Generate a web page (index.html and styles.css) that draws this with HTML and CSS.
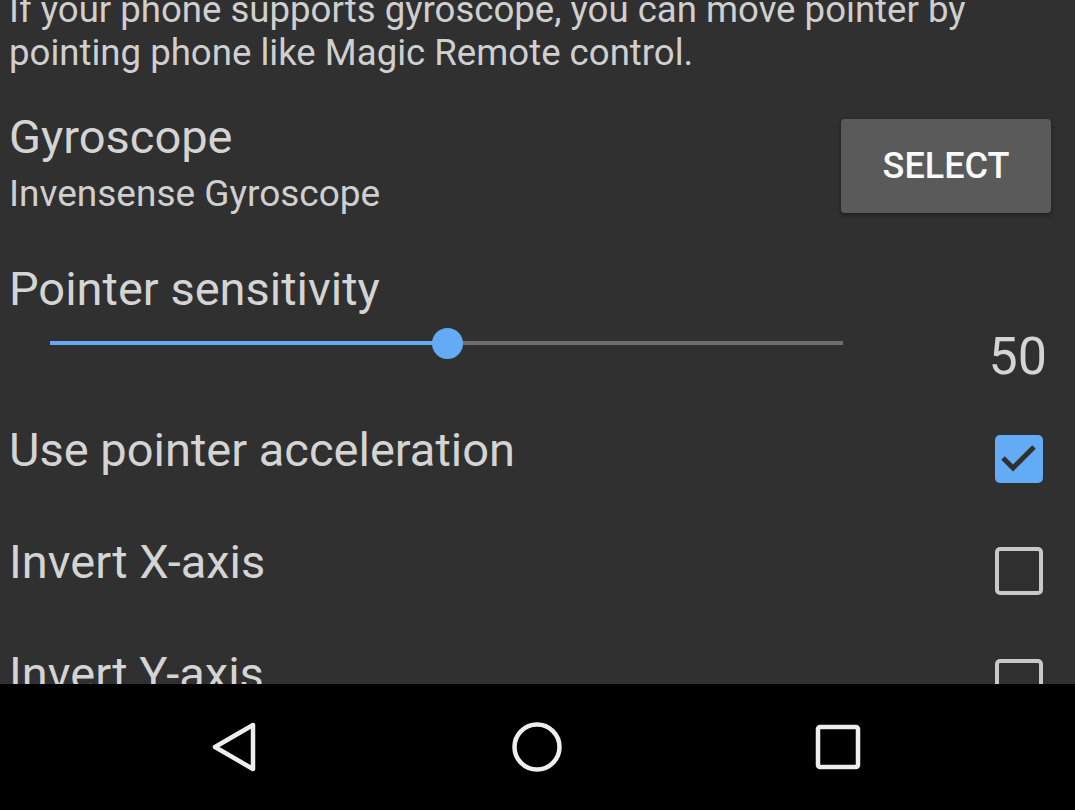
FILE: index.html
```html
<!DOCTYPE html>
<html>
<head>
<meta charset="utf-8">
<link rel="stylesheet" href="styles.css">
</head>
<body>
<div class="screen">
  <div class="content">
    <p class="desc">If your phone supports gyroscope, you can move pointer by pointing phone like Magic Remote control.</p>
    <div class="row gyro">
      <div class="texts">
        <div class="title">Gyroscope</div>
        <div class="sub">Invensense Gyroscope</div>
      </div>
      <button class="btn">SELECT</button>
    </div>
    <div class="sens">
      <div class="title">Pointer sensitivity</div>
      <div class="slider-row">
        <div class="slider">
          <div class="fill" style="width:50.1%"></div>
          <div class="thumb" style="left:50.1%"></div>
        </div>
        <div class="value">50</div>
      </div>
    </div>
    <div class="row check-row accel">
      <div class="title">Use pointer acceleration</div>
      <span class="cb checked">
        <svg viewBox="0 0 48 48" width="48" height="48"><rect x="0" y="0" width="48" height="48" rx="5" fill="#64abf5"/><path d="M8 23 L18 33 L39 12" fill="none" stroke="#303030" stroke-width="5"/></svg>
      </span>
    </div>
    <div class="row check-row">
      <div class="title">Invert X-axis</div>
      <span class="cb"></span>
    </div>
    <div class="row check-row">
      <div class="title">Invert Y-axis</div>
      <span class="cb"></span>
    </div>
  </div>
</div>
<div class="nav">
  <svg class="nav-icon" width="50" height="52" viewBox="0 0 50 52"><path d="M44 4 L44 48 L6 26 Z" fill="none" stroke="#eeeeee" stroke-width="4.5" stroke-linejoin="round"/></svg>
  <svg class="nav-icon" width="52" height="52" viewBox="0 0 52 52"><circle cx="26" cy="26" r="22.5" fill="none" stroke="#eeeeee" stroke-width="4.5"/></svg>
  <svg class="nav-icon" width="46" height="46" viewBox="0 0 46 46"><rect x="3" y="3" width="40" height="40" rx="2" fill="none" stroke="#eeeeee" stroke-width="4.5"/></svg>
</div>
</body>
</html>
```
FILE: styles.css
```css
html, body {
  margin: 0;
  padding: 0;
  background: #000;
}
body {
  width: 1075px;
  height: 810px;
  display: flex;
  flex-direction: column;
  font-family: Roboto, "Noto Sans", sans-serif;
  overflow: hidden;
}
.screen {
  height: 684px;
  flex: none;
  background: #303030;
  overflow: hidden;
  color: #d2d2d2;
}
.content {
  margin-top: -12px;
  padding: 0 24px 0 9px;
}
.desc {
  margin: 0;
  font-size: 36.6px;
  line-height: 43px;
  color: #cfcfcf;
}
.row {
  display: flex;
  align-items: flex-start;
  justify-content: space-between;
}
.gyro {
  margin-top: 35px;
}
.title {
  font-size: 47px;
  line-height: 56px;
  color: #d4d4d4;
}
.sub {
  font-size: 37px;
  line-height: 43px;
  margin-top: 7px;
  color: #cfcfcf;
}
.btn {
  width: 210px;
  height: 94px;
  margin-top: 10px;
  background: #5a5a5a;
  border: none;
  border-radius: 4px;
  color: #fafafa;
  font-family: Roboto, sans-serif;
  font-weight: 500;
  font-size: 36px;
  box-shadow: 0 2px 4px rgba(0,0,0,0.4);
  padding: 0;
}
.sens {
  margin-top: 46px;
}
.slider-row {
  display: flex;
  align-items: flex-start;
  height: 70px;
}
.slider {
  position: relative;
  margin-left: 41px;
  margin-top: 24px;
  width: 793px;
  height: 4px;
  background: #6d6d6d;
}
.fill {
  position: absolute;
  left: 0;
  top: 0;
  height: 4px;
  background: #64abf5;
}
.thumb {
  position: absolute;
  top: 2px;
  width: 31px;
  height: 31px;
  margin: -15.5px 0 0 -15.5px;
  border-radius: 50%;
  background: #64abf5;
}
.value {
  margin-left: auto;
  margin-top: 10px;
  margin-right: 4px;
  font-size: 52px;
  line-height: 60px;
  color: #d4d4d4;
}
.check-row {
  height: 112px;
}
.accel {
  margin-top: 35px;
}
.cb {
  width: 48px;
  height: 48px;
  margin-top: 13px;
  margin-right: 8px;
  box-sizing: border-box;
  border: 4.5px solid #c8c8c8;
  border-radius: 5px;
  display: block;
}
.cb.checked {
  border: none;
}
.cb svg {
  display: block;
}
.nav {
  height: 126px;
  flex: none;
  background: #000;
  display: flex;
  align-items: center;
  justify-content: space-between;
  padding: 0 214px 0 209px;
}
```
